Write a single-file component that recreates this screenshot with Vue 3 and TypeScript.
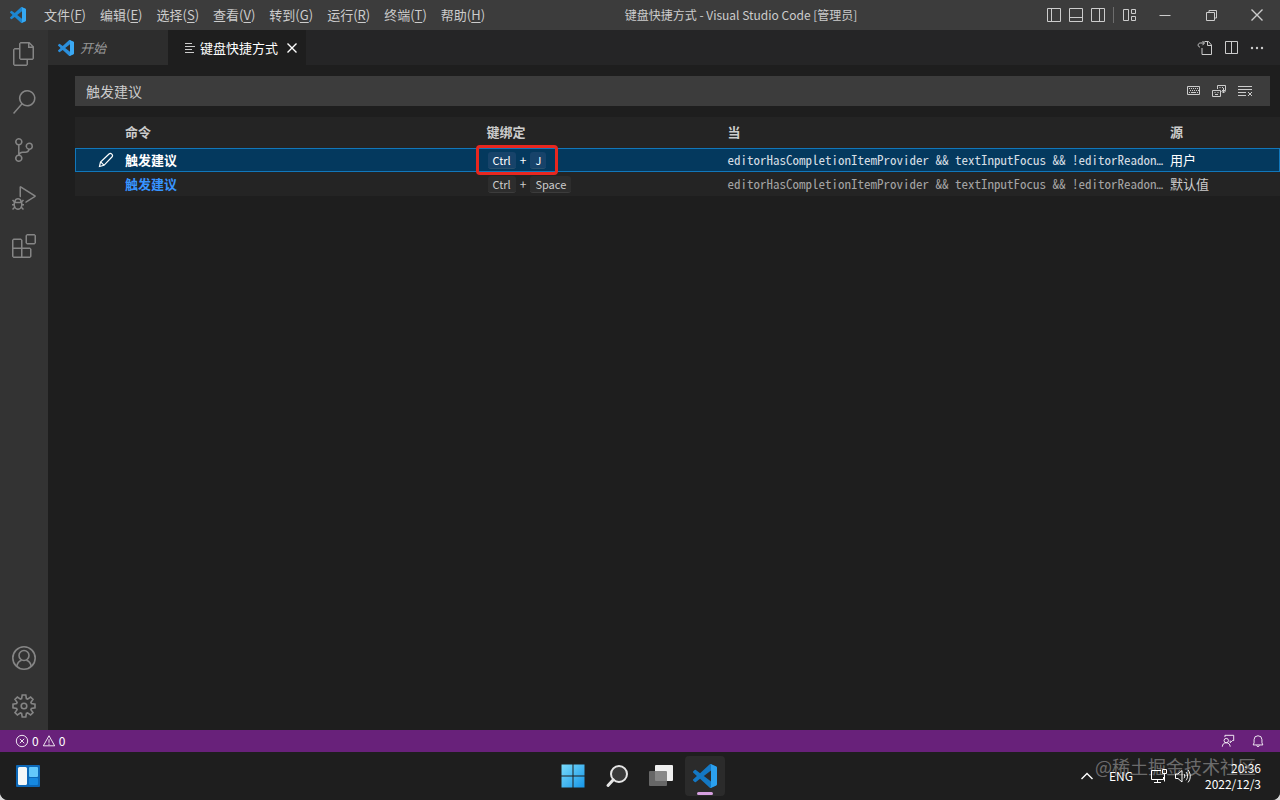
<script setup lang="ts">
import { ref } from 'vue'

interface MenuEntry { label: string; key: string }
interface Binding {
  id: number
  command: string
  keys: string[]
  when: string
  source: string
  selected: boolean
}

const menus: MenuEntry[] = [
  { label: '文件', key: 'F' },
  { label: '编辑', key: 'E' },
  { label: '选择', key: 'S' },
  { label: '查看', key: 'V' },
  { label: '转到', key: 'G' },
  { label: '运行', key: 'R' },
  { label: '终端', key: 'T' },
  { label: '帮助', key: 'H' },
]

const whenClause = 'editorHasCompletionItemProvider && textInputFocus && !editorReadon'
const bindings: Binding[] = [
  { id: 1, command: '触发建议', keys: ['Ctrl', 'J'], when: whenClause, source: '用户', selected: true },
  { id: 2, command: '触发建议', keys: ['Ctrl', 'Space'], when: whenClause, source: '默认值', selected: false },
]

const query = ref('触发建议')

const logoPath =
  'M23.15 2.587L18.21.21a1.494 1.494 0 0 0-1.705.29l-9.46 8.63-4.12-3.128a.999.999 0 0 0-1.276.057L.327 7.261A1 1 0 0 0 .326 8.74L3.899 12 .326 15.26a1 1 0 0 0 .001 1.479L1.65 17.94a.999.999 0 0 0 1.276.057l4.12-3.128 9.46 8.63a1.492 1.492 0 0 0 1.704.29l4.942-2.377A1.5 1.5 0 0 0 24 20.06V3.939a1.5 1.5 0 0 0-.85-1.352zm-5.146 14.861L10.826 12l7.178-5.448v10.896z'
const logoEdge =
  'M18.21.21l4.94 2.377A1.5 1.5 0 0 1 24 3.939V20.06a1.5 1.5 0 0 1-.85 1.352l-4.94 2.377a1.5 1.5 0 0 1-1.7-.29c.6.5 1.494.1 1.494-.7V1.2c0-.8-.9-1.2-1.494-.7a1.5 1.5 0 0 1 1.7-.29z'

const activities = [
  { name: '资源管理器', path: 'M17.5 0h-9L7 1.5V6H2.5L1 7.5v15.07L2.5 24h12.07L16 22.57V18h4.7l1.3-1.43V4.5L17.5 0zm0 2.12l2.38 2.38H17.5V2.12zm-3 20.38h-12v-15H7v9.07L8.5 18h6v4.5zm6-6h-12v-15H16V6h4.5v10.5z' },
  { name: '搜索', path: 'M15.25 0a8.25 8.25 0 0 0-6.18 13.72L1 22.88l1.12 1 8.05-9.12A8.251 8.251 0 1 0 15.25.01V0zm0 15a6.75 6.75 0 1 1 0-13.5 6.75 6.75 0 0 1 0 13.5z' },
  { name: '源代码管理', path: 'M21.007 8.222A3.738 3.738 0 0 0 15.045 5.2a3.737 3.737 0 0 0 1.156 6.583 2.988 2.988 0 0 1-2.668 1.67h-2.99a4.456 4.456 0 0 0-2.989 1.165V7.4a3.737 3.737 0 1 0-1.494 0v9.117a3.776 3.776 0 1 0 1.816.099 2.99 2.99 0 0 1 2.668-1.667h2.99a4.484 4.484 0 0 0 4.223-3.039 3.736 3.736 0 0 0 3.25-3.687zM4.565 3.738a2.242 2.242 0 1 1 4.484 0 2.242 2.242 0 0 1-4.484 0zm4.484 16.441a2.242 2.242 0 1 1-4.484 0 2.242 2.242 0 0 1 4.484 0zm8.221-9.715a2.242 2.242 0 1 1 0-4.485 2.242 2.242 0 0 1 0 4.485z' },
  { name: '运行和调试', path: 'M10.94 13.5l-1.32 1.32a3.73 3.73 0 0 0-7.24 0L1.06 13.5 0 14.56l1.72 1.72-.22.22V18H0v1.5h1.5v.08c.077.489.214.966.41 1.42L0 22.94 1.06 24l1.65-1.65A4.308 4.308 0 0 0 6 24a4.31 4.31 0 0 0 3.29-1.65L10.94 24 12 22.94 10.09 21c.198-.464.336-.951.41-1.45v-.1H12V18h-1.5v-1.5l-.22-.22L12 14.56l-1.06-1.06zM6 13.5a2.25 2.25 0 0 1 2.25 2.25h-4.5A2.25 2.25 0 0 1 6 13.5zm3 6a3.33 3.33 0 0 1-3 3 3.33 3.33 0 0 1-3-3v-2.25h6v2.25zm14.76-9.9v1.26L13.5 17.37V15.6l8.5-5.37L9 2v9.46a5.07 5.07 0 0 0-1.5-.72V.63L8.64 0l15.12 9.6z' },
  { name: '扩展', path: 'M13.5 1.5L15 0h7.5L24 1.5V9l-1.5 1.5H15L13.5 9V1.5zm1.5 0V9h7.5V1.5H15zM0 15V6l1.5-1.5H9L10.5 6v7.5H18l1.5 1.5v7.5L18 24H1.5L0 22.5V15zm9-1.5V6H1.5v7.5H9zM9 15H1.5v7.5H9V15zm1.5 7.5H18V15h-7.5v7.5z' },
]
</script>

<template>
  <div class="desktop">
    <header class="titlebar">
      <svg class="logo" viewBox="0 0 24 24" aria-hidden="true">
        <path :d="logoPath" fill="#1c86d1" /><path :d="logoEdge" fill="#35a8f2" />
      </svg>
      <nav class="menus">
        <button v-for="m in menus" :key="m.key" type="button">{{ m.label }}(<u>{{ m.key }}</u>)</button>
      </nav>
      <div class="window-title">键盘快捷方式 - Visual Studio Code [管理员]</div>
      <div class="layout-controls">
        <button type="button" aria-label="切换主侧栏"><svg viewBox="0 0 16 16"><path d="M1.5 1.5h13v13h-13zM5.5 1.5v13" /></svg></button>
        <button type="button" aria-label="切换面板"><svg viewBox="0 0 16 16"><path d="M1.5 1.5h13v13h-13zM1.5 10.5h13" /></svg></button>
        <button type="button" aria-label="切换辅助侧栏"><svg viewBox="0 0 16 16"><path d="M1.5 1.5h13v13h-13zM9.5 1.5v13" /></svg></button>
        <span class="divider"></span>
        <button type="button" aria-label="自定义布局"><svg viewBox="0 0 16 16"><path d="M1.5 2.5h5v11h-5zM9.5 2.5h4v4h-4zM9.5 9.5h4v4h-4z" /></svg></button>
      </div>
      <div class="window-controls">
        <button type="button" aria-label="最小化"><svg viewBox="0 0 16 16"><path d="M2.5 8.5h11" /></svg></button>
        <button type="button" aria-label="还原"><svg viewBox="0 0 16 16"><path d="M3.5 5.5h8v8h-8zM6 5V3.5h7.5V11H12" /></svg></button>
        <button type="button" aria-label="关闭"><svg class="bold" viewBox="0 0 16 16"><path d="M2.5 2.5l11 11M13.5 2.5l-11 11" /></svg></button>
      </div>
    </header>

    <div class="workbench">
      <aside class="activity-bar">
        <button v-for="a in activities" :key="a.name" type="button" :aria-label="a.name">
          <svg viewBox="0 0 24 24"><path :d="a.path" /></svg>
        </button>
        <span class="grow"></span>
        <button type="button" aria-label="帐户">
          <svg class="outline" viewBox="0 0 24 24"><circle cx="12" cy="12" r="11.2" /><circle cx="12" cy="9.5" r="5" /><path d="M4.8 20.4c.4-3.3 2.3-5.3 4.8-6.2M19.2 20.4c-.4-3.3-2.3-5.3-4.8-6.2" /></svg>
        </button>
        <button type="button" aria-label="管理">
          <svg class="outline" viewBox="0 0 24 24"><path d="M10.2 1h3.6l.6 3.6 1.2.5 3-2.1 2.4 2.4-2.1 3 .5 1.2 3.6.6v3.6l-3.6.6-.5 1.2 2.1 3-2.4 2.4-3-2.1-1.2.5-.6 3.6h-3.6l-.6-3.6-1.2-.5-3 2.1L3 18.6l2.1-3-.5-1.2L1 13.8v-3.6l3.6-.6.5-1.2-2.1-3L5.4 3l3 2.1 1.2-.5z" /><circle cx="12" cy="12" r="2.8" /></svg>
        </button>
      </aside>

      <main class="editor">
        <div class="tabs">
          <button type="button" class="tab preview">
            <svg class="logo" viewBox="0 0 24 24" aria-hidden="true">
              <path :d="logoPath" fill="#2b8fdc" /><path :d="logoEdge" fill="#3ba9f4" />
            </svg>
            <span>开始</span>
          </button>
          <div class="tab active">
            <svg class="list-icon" viewBox="0 0 12 12" aria-hidden="true"><path d="M1 1.5h7M1 4.5h10M1 7.5h7M1 10.5h9" /></svg>
            <span>键盘快捷方式</span>
            <button type="button" class="close" aria-label="关闭标签页"><svg class="bold" viewBox="0 0 16 16"><path d="M3.5 3.5l9 9M12.5 3.5l-9 9" /></svg></button>
          </div>
          <div class="tab-actions">
            <button type="button" aria-label="打开键盘快捷方式 (JSON)">
              <svg viewBox="0 0 16 16"><path d="M5 8v6.5h9.5V5L11.5 1.5H7.5M10.5 1.5v4h4M5.5 1L7.5 3 5.5 5.2M7 3H3.5C2 3 1 4 1.2 5.5 1.3 6.3 2 7 3 7" /></svg>
            </button>
            <button type="button" aria-label="拆分编辑器"><svg viewBox="0 0 16 16"><path d="M2.5 1.5h12v12h-12zM8.5 1.5v12" /></svg></button>
            <button type="button" aria-label="更多操作"><svg class="dots" viewBox="0 0 16 16"><circle cx="3" cy="8" r="1.2" /><circle cx="8" cy="8" r="1.2" /><circle cx="13" cy="8" r="1.2" /></svg></button>
          </div>
        </div>

        <div class="keybindings">
          <div class="search">
            <input v-model="query" type="text" aria-label="搜索键绑定" />
            <button type="button" aria-label="录制按键">
              <svg viewBox="0 0 16 16"><path d="M2.5 3.5h12v8h-12z" /><path d="M4 5.5h10M5 7.5h9" stroke-dasharray="1 1" /><path d="M4 9.5h1M6 9.5h5M12 9.5h1" /></svg>
            </button>
            <button type="button" aria-label="按优先级排序">
              <svg viewBox="0 0 16 16"><path d="M6.5 6V2.5h8v5H11M1.5 7.5h8v6h-8zM12.5 5v5M10.5 8l2 2 2-2M8.5 4.5h1M11 4.5h1M3.5 9.5h1M6.5 9.5h1M4 11.5h3" /></svg>
            </button>
            <button type="button" aria-label="清除搜索">
              <svg viewBox="0 0 16 16"><path d="M1 3.5h14M1 6.5h14M1 9.5h8M1 12.5h8M11 9l4 4M15 9l-4 4" /></svg>
            </button>
          </div>

          <table>
            <colgroup><col class="c-edit" /><col class="c-command" /><col class="c-keys" /><col /><col class="c-source" /></colgroup>
            <thead>
              <tr><th aria-label="编辑"></th><th>命令</th><th>键绑定</th><th>当</th><th>源</th></tr>
            </thead>
            <tbody>
              <tr v-for="b in bindings" :key="b.id" :class="{ selected: b.selected }">
                <td class="edit">
                  <button v-if="b.selected" type="button" aria-label="更改键绑定">
                    <svg class="pencil" viewBox="0 0 16 16"><path d="M1.5 14.5l1-4.5 8.5-8c1-.9 2-.7 2.800.1s1 1.900.1 2.900L6 13.300zM2.700 9.800l3.200 3.400" /></svg>
                  </button>
                </td>
                <td class="command">{{ b.command }}</td>
                <td class="keys">
                  <div class="chord">
                    <template v-for="(k, i) in b.keys" :key="k"><span v-if="i > 0">+</span><kbd>{{ k }}</kbd></template>
                    <i v-if="b.selected" class="marker"></i>
                  </div>
                </td>
                <td class="when">{{ b.when }}<span class="more">…</span></td>
                <td>{{ b.source }}</td>
              </tr>
            </tbody>
          </table>
        </div>
      </main>
    </div>

    <footer class="statusbar">
      <button type="button" class="problems">
        <svg viewBox="0 0 16 16"><circle cx="8" cy="8" r="6.5" /><path d="M5.5 5.5l5 5M10.5 5.5l-5 5" /></svg>
        <span>0</span>
        <svg viewBox="0 0 16 16"><path d="M8 2L14.5 13.5h-13zM8 6v4M8 11v1.5" /></svg>
        <span>0</span>
      </button>
      <span class="grow"></span>
      <button type="button" aria-label="反馈">
        <svg viewBox="0 0 16 16"><circle cx="6" cy="7.5" r="2.5" /><path d="M1.5 14.5c.2-2.8 1.8-4.5 4.5-4.5s4.3 1.7 4.5 4.5M4.5 3.5v-2h10v6h-1.5l-2.5 2.5V7.5" /></svg>
      </button>
      <button type="button" aria-label="通知">
        <svg viewBox="0 0 16 16"><path d="M2.5 12.5h11L12.5 10V6.5a4.5 4.5 0 0 0-9 0V10zM6.5 13c.3 2 2.7 2 3 0" /></svg>
      </button>
    </footer>

    <div class="taskbar">
      <div class="side">
        <button type="button" class="widgets" aria-label="小组件">
          <svg viewBox="0 0 24 22">
            <rect width="24" height="22" rx="1" fill="#0c68b8" /><rect x="2" y="2" width="9" height="18" rx="1.5" fill="#f3f7f8" />
            <rect x="13" y="2" width="9" height="10" rx="1" fill="#63c8fb" /><rect x="13" y="13" width="9" height="7" rx="1" fill="#1689e0" />
          </svg>
        </button>
      </div>
      <div class="apps">
        <button type="button" aria-label="开始菜单">
          <svg viewBox="0 0 24 24">
            <defs><linearGradient id="win" x1="0" y1="0" x2="24" y2="24" gradientUnits="userSpaceOnUse"><stop offset="0" stop-color="#7bdcfb" /><stop offset="1" stop-color="#1494e8" /></linearGradient></defs>
            <path fill="url(#win)" d="M.5.5h11v11H.5zM12.5.5h11v11h-11zM.5 12.5h11v11H.5zM12.5 12.5h11v11h-11z" />
          </svg>
        </button>
        <button type="button" aria-label="搜索">
          <svg viewBox="0 0 24 24"><circle cx="14" cy="10" r="8" fill="#3a3a3a" stroke="#e6e6e6" stroke-width="2" /><path d="M8.3 15.8L3 21.5" stroke="#e6e6e6" stroke-width="3" stroke-linecap="round" /></svg>
        </button>
        <button type="button" aria-label="任务视图">
          <svg viewBox="0 0 24 24"><rect x="6" y="1" width="18" height="16" rx="1" fill="#efefef" /><rect x="0" y="7" width="18" height="15" rx="1" fill="#747474" fill-opacity=".85" /></svg>
        </button>
        <button type="button" class="running" aria-label="Visual Studio Code">
          <svg viewBox="0 0 24 24"><path :d="logoPath" fill="#1478c4" /><path :d="logoEdge" fill="#2ba0ee" /></svg>
        </button>
      </div>
      <div class="side tray">
        <button type="button" aria-label="显示隐藏的图标"><svg class="bold" viewBox="0 0 16 16"><path d="M2.5 11L8 5.5l5.5 5.5" /></svg></button>
        <button type="button" class="lang">ENG</button>
        <button type="button" aria-label="网络"><svg viewBox="0 0 16 16"><path d="M10 2.5H.5v9h12V9M6.5 11.5v3M3 14.5h7M11.5 1.5h4v4h-4zM13.5 5.5v8" /></svg></button>
        <button type="button" aria-label="音量"><svg viewBox="0 0 16 16"><path d="M.5 6v4.5H3L7 14V2.5L3 6zM9 6c1 1.2 1 3 0 4.2M11 4c2 2.3 2 6 0 8.3M13 2c3 3.5 3 9 0 12.4" /></svg></button>
        <div class="clock"><time>20:36</time><time>2022/12/3</time></div>
        <div class="watermark">@稀土掘金技术社区</div>
      </div>
    </div>
  </div>
</template>

<style>
body {
  background: #d8d8d8;
}
</style>

<style scoped>
.desktop {
  display: flex;
  flex-direction: column;
  min-height: 100vh;
  overflow: hidden;
  border-radius: 0 0 8px 8px;
  background: #1e1e1e;
  color: #cccccc;
  font: 13px/20px "Noto Sans CJK SC", sans-serif;
}
button {
  display: flex;
  align-items: center;
  justify-content: center;
  margin: 0;
  padding: 0;
  border: 0;
  background: none;
  color: inherit;
  font: inherit;
}
svg {
  display: block;
  flex: none;
  width: 16px;
  height: 16px;
  fill: none;
  stroke: currentColor;
}
.bold {
  stroke-width: 1.4;
}
.pencil {
  stroke-width: 1.2;
}
.dots {
  fill: currentColor;
  stroke: none;
}
.grow {
  flex: 1;
}
.logo, .apps svg, .widgets svg {
  stroke: none;
}

.titlebar {
  display: flex;
  align-items: center;
  height: 30px;
  padding-left: 10px;
  background: #3c3c3c;
}
.menus {
  display: flex;
  margin-left: 11px;
}
.menus button {
  padding: 0 7px;
}
.menus u {
  text-underline-offset: 2px;
}
.window-title {
  flex: 1;
  padding-right: 56px;
  font-size: 12px;
  text-align: center;
  white-space: nowrap;
}
.layout-controls {
  display: flex;
  align-items: center;
  gap: 6px;
  padding-right: 4px;
}
.divider {
  width: 1px;
  height: 16px;
  margin: 0 2px 0 1px;
  background: #6d6d6d;
}
.window-controls {
  display: flex;
}
.window-controls button {
  width: 46px;
  height: 30px;
}

.workbench {
  display: flex;
  flex: 1;
}
.activity-bar {
  display: flex;
  flex-direction: column;
  width: 48px;
  background: #333333;
  color: #858585;
}
.activity-bar button {
  height: 48px;
}
.activity-bar svg {
  width: 24px;
  height: 24px;
  fill: currentColor;
  stroke: none;
}
.activity-bar .outline {
  fill: none;
  stroke: currentColor;
  stroke-width: 1.6;
}

.editor {
  flex: 1;
  min-width: 0;
}
.tabs {
  display: flex;
  height: 35px;
  background: #252526;
}
.tab {
  display: flex;
  align-items: center;
  justify-content: flex-start;
  gap: 6px;
  padding: 0 10px;
}
.preview {
  width: 120px;
  background: #2d2d2d;
  color: #969696;
  font-style: italic;
}
.active {
  padding: 0 6px 0 16px;
  gap: 4px;
  background: #1e1e1e;
  color: #ffffff;
}
.list-icon {
  width: 12px;
  height: 12px;
  color: #cccccc;
}
.close {
  margin-left: 2px;
}
.tab-actions {
  display: flex;
  align-items: center;
  gap: 10px;
  margin-left: auto;
  padding-right: 15px;
}

.keybindings {
  padding: 11px 0 0 27px;
}
.search {
  display: flex;
  align-items: center;
  gap: 10px;
  height: 30px;
  margin-right: 10px;
  padding-right: 17px;
  background: #3c3c3c;
}
.search input {
  flex: 1;
  min-width: 0;
  padding: 0 0 0 11px;
  border: 0;
  outline: 0;
  background: none;
  color: #cccccc;
  font: inherit;
  font-size: 14px;
}
table {
  width: 100%;
  margin-top: 11px;
  border-collapse: collapse;
  table-layout: fixed;
}
.c-edit {
  width: 50px;
}
.c-command {
  width: 30%;
}
.c-keys {
  width: 20%;
}
.c-source {
  width: 110px;
}
tr {
  background: #242424;
}
th {
  height: 29px;
  padding: 0 0 2px;
  font-weight: 700;
  text-align: left;
}
td {
  height: 24px;
  padding: 0;
  white-space: nowrap;
}
.selected {
  background: #04395e;
  outline: 1px solid #1177bb;
  outline-offset: -1px;
  color: #ffffff;
}
.edit button {
  margin-left: 23px;
}
.command {
  color: #3794ff;
  font-weight: 700;
}
.selected .command {
  color: #ffffff;
}
.chord {
  position: relative;
  display: flex;
  align-items: center;
  gap: 4px;
  width: max-content;
  padding-left: 1px;
  font-size: 12px;
}
kbd {
  padding: 0 5px;
  border-bottom: 1px solid #3c3c3c;
  border-radius: 3px;
  background: #2d2d2d;
  font: 11px/16px "Noto Sans CJK SC", sans-serif;
}
.selected kbd {
  border-color: #2a506c;
  background: #17436a;
}
.marker {
  position: absolute;
  inset: -5px -12px -5px -11px;
  border: 3px solid #e8271f;
  border-radius: 4px;
}
.when {
  color: #a3a3a3;
  font: 13px/20px "Noto Sans Mono CJK SC", "DejaVu Sans Mono", monospace;
}
.more {
  font: 11px/16px "DejaVu Sans Mono", monospace;
}
.selected .when {
  color: #d5dde3;
}

.statusbar {
  display: flex;
  align-items: center;
  gap: 16px;
  height: 22px;
  padding: 0 15px;
  background: #68217a;
  color: #ffffff;
  font-size: 12px;
}
.statusbar svg {
  width: 14px;
  height: 14px;
}
.problems {
  gap: 3px;
}

.taskbar {
  display: flex;
  align-items: center;
  height: 48px;
  background: #1e1e1e;
  color: #ffffff;
}
.side {
  display: flex;
  box-sizing: border-box;
  flex: 1 1 50%;
  align-items: center;
  align-self: stretch;
}
.widgets {
  margin-left: 16px;
}
.widgets svg {
  width: 24px;
  height: 22px;
}
.apps {
  display: flex;
  flex: none;
  gap: 4px;
}
.apps button {
  width: 40px;
  height: 40px;
  border-radius: 4px;
}
.apps svg {
  width: 24px;
  height: 24px;
}
.running {
  position: relative;
  background: #2b2b2b;
}
.running::after {
  content: "";
  position: absolute;
  bottom: 1px;
  left: 12px;
  width: 16px;
  height: 3px;
  border-radius: 2px;
  background: #d6a0e0;
}
.tray {
  position: relative;
  justify-content: flex-end;
  gap: 8px;
  padding-right: 19px;
  font-size: 12px;
}
.lang {
  margin: 0 10px 0 6px;
}
.clock {
  display: flex;
  flex-direction: column;
  margin-left: 6px;
  line-height: 16px;
  text-align: right;
}
.watermark {
  position: absolute;
  top: 4px;
  right: 24px;
  color: rgba(255, 255, 255, 0.36);
  font-size: 18px;
  line-height: 20px;
  pointer-events: none;
}
</style>
